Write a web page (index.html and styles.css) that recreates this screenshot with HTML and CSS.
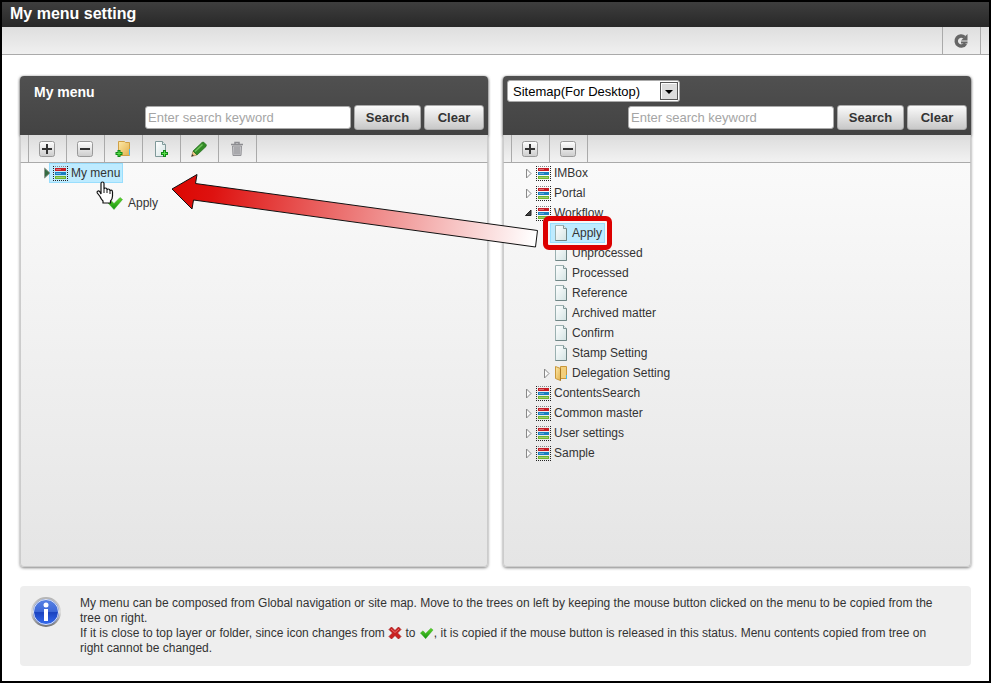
FILE: index.html
```html
<!DOCTYPE html>
<html lang="en">
<head>
    <meta charset="UTF-8">
    <meta name="viewport" content="width=device-width, initial-scale=1.0">
    <title>My menu setting</title>
    <link rel="stylesheet" href="styles.css">
</head>
<body>

<!-- shared icons -->
<svg class="defs" width="0" height="0" aria-hidden="true">
    <defs>
        <linearGradient id="gBtn" x1="0" y1="0" x2="0" y2="1">
            <stop offset="0" stop-color="#fff"/><stop offset="1" stop-color="#ccc"/>
        </linearGradient>
        <linearGradient id="gPage" x1="0" y1="0" x2="1" y2="1">
            <stop offset="0" stop-color="#fff"/><stop offset="1" stop-color="#d3e3e3"/>
        </linearGradient>
        <linearGradient id="gFolder" x1="0" y1="0" x2="1" y2="1">
            <stop offset="0" stop-color="#fde9a8"/><stop offset="1" stop-color="#e2b04c"/>
        </linearGradient>
        <linearGradient id="gCheck" x1="0" y1="0" x2="0" y2="1">
            <stop offset="0" stop-color="#5fd32c"/><stop offset="1" stop-color="#159410"/>
        </linearGradient>
        <linearGradient id="gInfo" x1="0" y1="0" x2="0" y2="1">
            <stop offset="0" stop-color="#5b86e6"/><stop offset=".48" stop-color="#3d68d8"/>
            <stop offset=".52" stop-color="#1a43c0"/><stop offset="1" stop-color="#3a72f5"/>
        </linearGradient>
        <linearGradient id="gRing" x1="0" y1="0" x2="0" y2="1">
            <stop offset="0" stop-color="#b5b5b5"/><stop offset=".5" stop-color="#dedede"/><stop offset="1" stop-color="#777"/>
        </linearGradient>
        <linearGradient id="gArrow" gradientUnits="userSpaceOnUse" x1="0" y1="0" x2="366" y2="50">
            <stop offset="0" stop-color="#dc0500"/><stop offset=".12" stop-color="#de1210"/><stop offset="1" stop-color="#fff"/>
        </linearGradient>
    </defs>
    <symbol id="plus" viewBox="0 0 16 16">
        <rect x=".5" y=".5" width="15" height="15" rx="2" fill="url(#gBtn)" stroke="#999"/>
        <path d="M8 3v10M3 8h10" stroke="#333" stroke-width="2"/>
    </symbol>
    <symbol id="minus" viewBox="0 0 16 16">
        <rect x=".5" y=".5" width="15" height="15" rx="2" fill="url(#gBtn)" stroke="#999"/>
        <path d="M3 8h10" stroke="#333" stroke-width="2"/>
    </symbol>
    <symbol id="menu" viewBox="0 0 16 16">
        <path d="M1 1.500h15" stroke="#888" stroke-dasharray="1 1"/>
        <path d="M1 15.500h15M1.500 1v15M15.500 1v15" stroke="#222" stroke-dasharray="1 1"/>
        <rect x="3" y="3" width="11" height="3" fill="#c61d25"/>
        <rect x="3" y="7" width="11" height="3" fill="#1b7fc0"/>
        <rect x="3" y="11" width="11" height="3" fill="#6fb52c"/>
        <path d="M4 4.500h5M4 8.500h5M4 12.500h9" stroke="#fff" stroke-opacity=".35"/>
    </symbol>
    <symbol id="page" viewBox="0 0 16 16">
        <path d="M2.500.5h8l3 3v12h-11z" fill="url(#gPage)" stroke="#9ab0b0"/>
        <path d="M13.500 3.500v12h-11" fill="none" stroke="#6f8585"/>
        <path d="M10.500.5v3h3" fill="#e3eeee" stroke="#7f9595"/>
    </symbol>
    <symbol id="folder" viewBox="0 0 16 16">
        <path d="M7.500 1.500h6v12h-6z" fill="#f2cf7c" stroke="#c9973a"/>
        <path d="M2.500 1.500l5 2v12l-5-2z" fill="url(#gFolder)" stroke="#c9973a"/>
        <path d="M7.500 3.500v12" stroke="#a87820"/>
        <path d="M13.500 10v4" stroke="#47b7ea"/>
    </symbol>
    <symbol id="closed" viewBox="0 0 8 12">
        <path d="M2.500 2l4.500 4.500L2.500 11z" fill="#fafafa" stroke="#888"/>
    </symbol>
    <symbol id="opened" viewBox="0 0 8 12">
        <path d="M7 3v5.500H1.500z" fill="#444" stroke="#222"/>
    </symbol>
    <symbol id="check" viewBox="0 0 16 16">
        <path d="M1 8l3-2.500 3 3 6-6L15.500 4.500 7 14.500z" fill="url(#gCheck)" stroke="#36a824" stroke-width=".5"/>
    </symbol>
    <symbol id="cross" viewBox="0 0 14 14">
        <path d="M1 3.500L3.500 1 7 4.500 10.500 1 13 3.500 9.500 7 13 10.500 10.500 13 7 9.500 3.500 13 1 10.500 4.500 7z" fill="#c92020" stroke="#a51212" stroke-width=".7"/>
        <path d="M3 3l4 3.500L11 3" fill="none" stroke="#e66a6a" stroke-width="1"/>
    </symbol>
</svg>

<div class="page">
    <header class="title-bar">
        <h1>My menu setting</h1>
    </header>
    <div class="top-tools">
        <button type="button" class="tool" aria-label="Refresh">
            <svg width="16" height="16" viewBox="0 0 16 16">
                <path d="M12.500 10.500A5 5 0 1 1 11.500 4.200" fill="none" stroke="#666" stroke-width="3.500"/>
                <path d="M14.500 1v6.500H8z" fill="#666"/>
                <path d="M14.500 9.500H8" stroke="#666" stroke-width="2"/>
            </svg>
        </button>
    </div>

    <main>
        <div class="panels">
            <section class="panel">
                <div class="panel-head">
                    <h2>My menu</h2>
                    <form class="search">
                        <input type="text" placeholder="Enter search keyword" aria-label="Search my menu">
                        <button type="button">Search</button>
                        <button type="button">Clear</button>
                    </form>
                </div>
                <div class="tools">
                    <button type="button" class="tool" aria-label="Expand all"><svg width="16" height="16"><use href="#plus"/></svg></button>
                    <button type="button" class="tool" aria-label="Collapse all"><svg width="16" height="16"><use href="#minus"/></svg></button>
                    <button type="button" class="tool" aria-label="New folder">
                        <svg width="16" height="16" viewBox="0 0 16 16">
                            <path d="M3.500.5h6l1 1h4v13h-11z" fill="url(#gFolder)" stroke="#cfa046"/>
                            <path d="M14.500 8v6" stroke="#55b9e8"/>
                            <path d="M4 9v7M.5 12.500h7" stroke="#118a18" stroke-width="3"/>
                            <path d="M4 10v5M1.500 12.500h5" stroke="#5be04c"/>
                        </svg>
                    </button>
                    <button type="button" class="tool" aria-label="New item">
                        <svg width="16" height="16" viewBox="0 0 16 16">
                            <path d="M2.500.5h7l3 3v12h-10z" fill="url(#gPage)" stroke="#7f9999"/>
                            <path d="M9.500.5v3h3" fill="#e3eeee" stroke="#7f9999"/>
                            <path d="M11.500 9v7M8 12.500h7" stroke="#118a18" stroke-width="3"/>
                            <path d="M11.500 10v5M9 12.500h5" stroke="#5be04c"/>
                        </svg>
                    </button>
                    <button type="button" class="tool" aria-label="Edit">
                        <svg width="16" height="16" viewBox="0 0 16 16">
                            <path d="M.5 15.500L2 10l4 4z" fill="#edc987" stroke="#876432" stroke-width=".5"/>
                            <path d="M2 10L11 1.500q1-.8 2 0l2 2q.8 1 0 2L6 14z" fill="#328b27" stroke="#216b1a" stroke-width=".7"/>
                            <path d="M4 10.500l7.500-7" stroke="#73c45d" stroke-width="1.500"/>
                            <path d="M.5 15.500l.7-2.500 1.700 1.700z" fill="#333"/>
                        </svg>
                    </button>
                    <button type="button" class="tool" aria-label="Delete">
                        <svg width="16" height="16" viewBox="0 0 16 16">
                            <path d="M3.500 5h9l-.5 9.500H4z" fill="#c8c8cb" stroke="#929296"/>
                            <path d="M2 3.500h12M6 3V1.500h4V3" fill="none" stroke="#8d8d91" stroke-width="1.500"/>
                            <path d="M6 6v7.500M8 6v7.500M10 6v7.500" stroke="#8a8a8e"/>
                        </svg>
                    </button>
                </div>
                <ul class="tree">
                    <li class="row">
                        <svg class="toggle near" width="8" height="12" viewBox="0 0 8 12"><path d="M1.500 1l5.500 5-5.500 5z" fill="#356b42" stroke="#8f9b92"/></svg>
                        <a href="#" class="node selected"><svg width="16" height="16"><use href="#menu"/></svg>My menu</a>
                        <div class="drag">
                            <svg class="hand" width="18" height="23" viewBox="0 0 18 23">
                                <path d="M5 13V2.500Q5 1 6.500 1T8 2.500V8q0-1 1.500-1T11 8.500v.5q0-1 1.300-1T14 9.500v.5q0-.8 1.200-.8T16.500 11v4q0 3-2 5v2H7v-2q-2-2-3-4.500L1.300 12q-.6-1.500.7-2 1-.3 2 1z" fill="#fff" stroke="#111" stroke-width="1.200"/>
                                <path d="M8 8v4M11 9v3M14 10v3" stroke="#111"/>
                            </svg>
                            <svg class="ok" width="16" height="16"><use href="#check"/></svg>
                            <span>Apply</span>
                        </div>
                    </li>
                </ul>
            </section>

            <section class="panel">
                <div class="panel-head">
                    <div class="select-box">
                        <select aria-label="Menu source">
                            <option>Sitemap(For Desktop)</option>
                        </select>
                        <svg class="drop" width="18" height="18" viewBox="0 0 18 18">
                            <rect x=".5" y=".5" width="17" height="17" fill="#ddd" stroke="#555"/>
                            <path d="M1.500 16.500v-15h15" fill="none" stroke="#fff"/>
                            <path d="M5 8h8l-4 4z" fill="#000"/>
                        </svg>
                    </div>
                    <form class="search">
                        <input type="text" placeholder="Enter search keyword" aria-label="Search sitemap">
                        <button type="button">Search</button>
                        <button type="button">Clear</button>
                    </form>
                </div>
                <div class="tools">
                    <button type="button" class="tool" aria-label="Expand all"><svg width="16" height="16"><use href="#plus"/></svg></button>
                    <button type="button" class="tool" aria-label="Collapse all"><svg width="16" height="16"><use href="#minus"/></svg></button>
                </div>
                <ul class="tree">
                    <li class="row"><svg class="toggle" width="8" height="12"><use href="#closed"/></svg><a href="#" class="node"><svg width="16" height="16"><use href="#menu"/></svg>IMBox</a></li>
                    <li class="row"><svg class="toggle" width="8" height="12"><use href="#closed"/></svg><a href="#" class="node"><svg width="16" height="16"><use href="#menu"/></svg>Portal</a></li>
                    <li>
                        <div class="row"><svg class="toggle" width="8" height="12"><use href="#opened"/></svg><a href="#" class="node"><svg width="16" height="16"><use href="#menu"/></svg>Workflow</a></div>
                        <ul>
                            <li class="row leaf">
                                <a href="#" class="node selected"><svg width="16" height="16"><use href="#page"/></svg>Apply<span class="marker"></span></a>
                                <svg class="arrow" width="368" height="76" viewBox="0 0 368 76">
                                    <path d="M1 16L26 1.500 24.500 10.500 366.500 57.500 364.500 74 22.500 27 21 36z" fill="url(#gArrow)" stroke="#111"/>
                                </svg>
                            </li>
                            <li class="row leaf"><a href="#" class="node"><svg width="16" height="16"><use href="#page"/></svg>Unprocessed</a></li>
                            <li class="row leaf"><a href="#" class="node"><svg width="16" height="16"><use href="#page"/></svg>Processed</a></li>
                            <li class="row leaf"><a href="#" class="node"><svg width="16" height="16"><use href="#page"/></svg>Reference</a></li>
                            <li class="row leaf"><a href="#" class="node"><svg width="16" height="16"><use href="#page"/></svg>Archived matter</a></li>
                            <li class="row leaf"><a href="#" class="node"><svg width="16" height="16"><use href="#page"/></svg>Confirm</a></li>
                            <li class="row leaf"><a href="#" class="node"><svg width="16" height="16"><use href="#page"/></svg>Stamp Setting</a></li>
                            <li class="row"><svg class="toggle" width="8" height="12"><use href="#closed"/></svg><a href="#" class="node"><svg width="16" height="16"><use href="#folder"/></svg>Delegation Setting</a></li>
                        </ul>
                    </li>
                    <li class="row"><svg class="toggle" width="8" height="12"><use href="#closed"/></svg><a href="#" class="node"><svg width="16" height="16"><use href="#menu"/></svg>ContentsSearch</a></li>
                    <li class="row"><svg class="toggle" width="8" height="12"><use href="#closed"/></svg><a href="#" class="node"><svg width="16" height="16"><use href="#menu"/></svg>Common master</a></li>
                    <li class="row"><svg class="toggle" width="8" height="12"><use href="#closed"/></svg><a href="#" class="node"><svg width="16" height="16"><use href="#menu"/></svg>User settings</a></li>
                    <li class="row"><svg class="toggle" width="8" height="12"><use href="#closed"/></svg><a href="#" class="node"><svg width="16" height="16"><use href="#menu"/></svg>Sample</a></li>
                </ul>
            </section>
        </div>

        <div class="info">
            <svg width="32" height="32" viewBox="0 0 32 32">
                <circle cx="16" cy="16" r="14" fill="url(#gInfo)" stroke="url(#gRing)" stroke-width="2"/>
                <circle cx="16" cy="16" r="12.500" fill="none" stroke="#e4e8f2"/>
                <circle cx="16" cy="9" r="2.500" fill="#fff"/>
                <path d="M14 13h4v12h-4z" fill="#fff"/>
            </svg>
            <p>
                My menu can be composed from Global navigation or site map. Move to the trees on left by keeping the mouse button clicked on the menu to be copied from the tree on right.<br>
                If it is close to top layer or folder, since icon changes from <svg width="14" height="14"><use href="#cross"/></svg> to <svg width="15" height="14"><use href="#check"/></svg>, it is copied if the mouse button is released in this status. Menu contents copied from tree on right cannot be changed.
            </p>
        </div>
    </main>
</div>

</body>
</html>
```

FILE: styles.css
```css
* {
    box-sizing: border-box;
}

body {
    margin: 0;
    font-family: "Liberation Sans", Arial, sans-serif;
    font-size: 12px;
    color: #333;
    background-color: #fff;
}

.defs {
    position: absolute;
}

.page {
    display: flex;
    flex-direction: column;
    min-height: 100vh;
    border: 2px solid #000;
}

.title-bar {
    height: 25px;
    padding: 0 8px;
    background: linear-gradient(#3e3e3e, #282828);
}

h1 {
    margin: 0;
    font-size: 16px;
    line-height: 24px;
    color: #fff;
}

.top-tools {
    display: flex;
    justify-content: flex-end;
    height: 28px;
    padding-right: 8px;
    background: linear-gradient(#dedede, #f0f0f0);
    border-bottom: 1px solid #aaa;
}

.tool {
    display: flex;
    align-items: center;
    justify-content: center;
    width: 38px;
    padding: 0 2px 0 0;
    border: none;
    border-right: 1px solid #aaa;
    background: none;
    cursor: pointer;
}

.tool:first-child {
    width: 39px;
    border-left: 1px solid #aaa;
}

main {
    flex: 1;
    display: flex;
    flex-direction: column;
    gap: 19px;
    padding: 21px 18px 15px;
}

.panels {
    flex: 1;
    display: grid;
    grid-template-columns: 1fr 1fr;
    gap: 15px;
}

.panel {
    display: flex;
    flex-direction: column;
    border-radius: 4px;
    box-shadow: 0 1px 3px rgba(0, 0, 0, 0.5);
}

.panel-head {
    display: flex;
    flex-direction: column;
    gap: 3px;
    padding: 4px 4px 5px;
    background: linear-gradient(#505050, #434343);
    border-radius: 4px 4px 0 0;
    box-shadow: 0 1px 3px rgba(0, 0, 0, 0.5);
}

h2 {
    margin: 0;
    padding-left: 10px;
    height: 22px;
    font-size: 14px;
    line-height: 24px;
    color: #fff;
}

.select-box {
    position: relative;
    align-self: flex-start;
    width: 173px;
    height: 22px;
}

select {
    width: 100%;
    height: 22px;
    padding: 0 5px;
    border: 1px solid #aaa;
    border-radius: 3px;
    background-color: #fff;
    color: #000;
    font-family: inherit;
    font-size: 13px;
    appearance: none;
}

.drop {
    position: absolute;
    top: 2px;
    right: 2px;
    pointer-events: none;
}

.search {
    display: flex;
    justify-content: flex-end;
    align-items: center;
    gap: 3px;
}

.search input {
    width: 206px;
    height: 23px;
    padding: 0 2px;
    border: 1px solid #aaa;
    border-radius: 3px;
    font-family: inherit;
    font-size: 13px;
}

.search input::placeholder {
    color: #a5a5a5;
}

.search button {
    width: 60px;
    height: 25px;
    padding: 0;
    border: 1px solid #aaa;
    border-radius: 3px;
    background: linear-gradient(#fafafa, #c8c8c8);
    color: #333;
    font-family: inherit;
    font-size: 13px;
    font-weight: bold;
    cursor: pointer;
}

.search input + button {
    width: 67px;
}

.tools {
    display: flex;
    height: 28px;
    padding-left: 7px;
    background: linear-gradient(#dcdcdc, #f2f2f2);
    border: 1px solid #ccc;
    border-top: none;
    border-bottom-color: #aaa;
}

ul {
    margin: 0;
    padding: 0;
    list-style: none;
}

.tree {
    flex: 1;
    padding-left: 18px;
    background: linear-gradient(#fafafa, #e5e5e5);
    border: 1px solid #ccc;
    border-top: none;
    border-radius: 0 0 4px 4px;
}

.tree ul {
    padding-left: 18px;
}

.row {
    position: relative;
    display: flex;
    align-items: center;
    height: 20px;
}

.leaf {
    padding-left: 10px;
}

.toggle {
    margin-left: 2px;
}

.toggle.near {
    position: relative;
    z-index: 2;
    margin: 0 -2px 0 4px;
}

.node {
    display: flex;
    align-items: center;
    gap: 3px;
    height: 20px;
    padding: 0 2px;
    border: 1px solid transparent;
    color: #333;
    text-decoration: none;
}

.selected {
    position: relative;
    z-index: 1;
    background-color: #beebff;
    border-color: #99defd;
}

/* red frame around the item being dragged */
.marker {
    position: absolute;
    inset: -8px;
    border: 5px solid #dc0000;
    border-radius: 6px;
}

.arrow {
    position: absolute;
    top: -50px;
    left: -369px;
    pointer-events: none;
}

/* pointer with the dragged item */
.drag {
    position: absolute;
    z-index: 2;
    top: 18px;
    left: 57px;
    display: flex;
    align-items: flex-start;
}

.hand {
    position: relative;
    z-index: 1;
}

.ok {
    margin: 14px 5px 0 -7px;
}

.drag span {
    margin-top: 15px;
}

.info {
    display: flex;
    gap: 18px;
    padding: 10px 20px 10px 10px;
    background-color: #eee;
    border-radius: 4px;
}

.info > svg {
    flex: none;
}

.info p {
    margin: 0;
    line-height: 15px;
}

.info p svg {
    vertical-align: -3px;
}
```
